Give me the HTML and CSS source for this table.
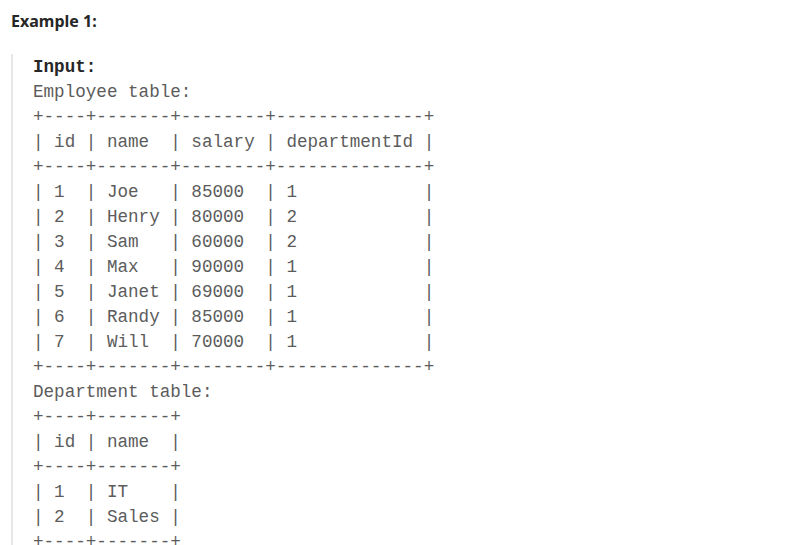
FILE: index.html
```html
<!DOCTYPE html>
<html>
<head>
<meta charset="utf-8">
<link rel="stylesheet" href="styles.css">
</head>
<body>
<div class="page">
<p class="example-title">Example 1:</p>
<pre class="example-block"><strong>Input:</strong>
Employee table:
+----+-------+--------+--------------+
| id | name  | salary | departmentId |
+----+-------+--------+--------------+
| 1  | Joe   | 85000  | 1            |
| 2  | Henry | 80000  | 2            |
| 3  | Sam   | 60000  | 2            |
| 4  | Max   | 90000  | 1            |
| 5  | Janet | 69000  | 1            |
| 6  | Randy | 85000  | 1            |
| 7  | Will  | 70000  | 1            |
+----+-------+--------+--------------+
Department table:
+----+-------+
| id | name  |
+----+-------+
| 1  | IT    |
| 2  | Sales |
+----+-------+
</pre>
</div>
</body>
</html>
```
FILE: styles.css
```css
html, body {
  margin: 0;
  padding: 0;
  background: #ffffff;
}

.page {
  padding: 0 0 0 11px;
}

.example-title {
  margin: 9px 0 0 0;
  font-family: "Noto Sans", "Open Sans", sans-serif;
  font-weight: 700;
  font-size: 16px;
  line-height: 24px;
  color: #262626;
}

.example-block {
  margin: 21px 0 0 0;
  padding: 1px 0 0 20px;
  border-left: 2px solid #e6e6e6;
  font-family: "Liberation Mono", "DejaVu Sans Mono", monospace;
  font-size: 17.6px;
  line-height: 25px;
  color: #5c5c5c;
  white-space: pre;
}

.example-block strong {
  font-weight: 700;
  color: #262626;
}
```
